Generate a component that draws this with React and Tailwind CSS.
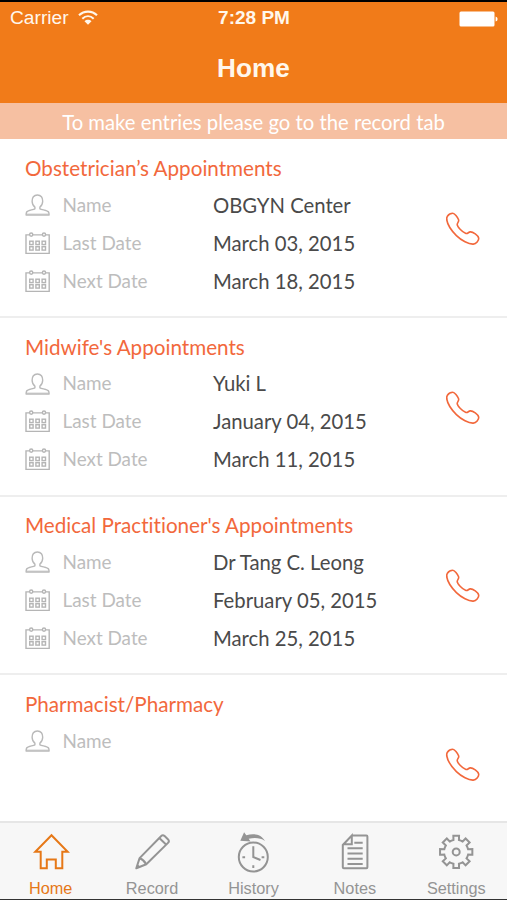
import React from 'react';

const sections = [
  {
    title: 'Obstetrician’s Appointments',
    rows: [
      ['Name', 'OBGYN Center'],
      ['Last Date', 'March 03, 2015'],
      ['Next Date', 'March 18, 2015'],
    ],
  },
  {
    title: "Midwife's Appointments",
    rows: [
      ['Name', 'Yuki L'],
      ['Last Date', 'January 04, 2015'],
      ['Next Date', 'March 11, 2015'],
    ],
  },
  {
    title: "Medical Practitioner's Appointments",
    rows: [
      ['Name', 'Dr Tang C. Leong'],
      ['Last Date', 'February 05, 2015'],
      ['Next Date', 'March 25, 2015'],
    ],
  },
  { title: 'Pharmacist/Pharmacy', rows: [['Name', '']] },
];

function WifiIcon() {
  return (
    <svg width="20" height="16" viewBox="0 0 20 16" fill="none" stroke="#fff7ec" strokeWidth="2.1">
      <path d="M1 5.3C6.1.4 13.9.4 19 5.3" />
      <path d="M4.3 8.7C7.7 5.4 12.3 5.4 15.7 8.7" />
      <path d="M6.5 11.2C8.5 9.3 11.5 9.3 13.5 11.2L10 14.7Z" fill="#fff7ec" stroke="none" />
    </svg>
  );
}

function BatteryIcon() {
  return (
    <svg width="39" height="16" viewBox="0 0 39 16" fill="#fff">
      <rect x="0.5" y="0.5" width="35" height="15" rx="1.5" />
      <path d="M36.6 5.5Q38.6 6 38.6 8Q38.6 10 36.6 10.5Z" />
    </svg>
  );
}

function PersonIcon() {
  return (
    <svg width="26" height="24" viewBox="0 0 26 24" fill="none" stroke="#b9b9b9" strokeWidth="1.4" strokeLinejoin="round">
      <path d="M12.4 2C8.8 2 7 4.7 7.1 8.2C7.2 10.8 8.4 13 9.9 14.1V15.8C8 17 2.6 17.1 1.6 19.1C1.2 20 1.1 21.2 1.1 22.1H24.1C24.1 21.2 24 20 23.6 19.1C22.6 17.1 17.1 17 14.9 15.8V14.1C16.4 13 17.6 10.8 17.7 8.2C17.8 4.7 16 2 12.4 2Z" />
      <path d="M1.5 21.2H23.9" strokeWidth="1" />
    </svg>
  );
}

function CalendarIcon() {
  return (
    <svg width="26" height="24" viewBox="0 0 26 24" fill="none" stroke="#b5b5b5" strokeWidth="1.4">
      <path d="M4.6 3.9H1V22.4H24.2V3.9H20.6M7.9 3.9H17.3" />
      <circle cx="6.2" cy="3.6" r="1.6" />
      <circle cx="19" cy="3.6" r="1.6" />
      {[6.4, 12.6, 18.8].map((x) => (
        <g key={x}>
          <rect x={x - 1.7} y="10.2" width="3.4" height="3.4" />
          <rect x={x - 1.7} y="15.7" width="3.4" height="3.4" />
        </g>
      ))}
    </svg>
  );
}

function PhoneIcon() {
  return (
    <svg width="36" height="36" viewBox="0 0 36 36" fill="none" stroke="#f2683c" strokeWidth="1.6" strokeLinejoin="round">
      <path d="M2.4 5.2C3.5 3.6 5.8 2.3 7.8 2.3C9.6 2.3 12.5 6.1 13.6 8.7C14.4 10.7 12.2 11.5 12.2 13.5C12.2 15.8 17.2 21.1 20.5 22.3C22.7 23.1 23.3 21.2 25.2 20.9C27.7 20.6 33.4 24.6 33.7 27.2C33.9 29.5 31.2 32.9 28.3 33.1C23.8 33.4 16.3 29.4 11.4 24.6C6.5 19.7 2.5 13.3 1.8 9C1.6 7.4 1.7 6.2 2.4 5.2Z" />
    </svg>
  );
}

function HomeIcon() {
  return (
    <svg width="38" height="42" viewBox="0 0 38 42" fill="none" stroke="currentColor" strokeWidth="2">
      <path d="M19.5 4.3L3.3 20.8H8.7V37.3H14.8V28.5H23.8V37.3H30.3V20.8H35.7Z" />
    </svg>
  );
}

function PencilIcon() {
  return (
    <svg width="38" height="42" viewBox="0 0 38 42" fill="none" stroke="currentColor" strokeWidth="2" strokeLinejoin="round">
      <path d="M3.3 37.3L6.6 27.1L28 5.2Q29.8 3.5 31.6 5.1L35.1 8.4Q36.7 10.2 35 11.9L13.3 33.3Z" />
      <path d="M6.7 27.3Q11 28.9 13.2 33.2M26.3 7L33.3 13.7" />
      <path d="M3.1 37.5L4.4 33L7.7 36Z" fill="currentColor" stroke="none" />
    </svg>
  );
}

function HistoryIcon() {
  return (
    <svg width="38" height="42" viewBox="0 0 38 42" fill="none" stroke="currentColor" strokeWidth="2">
      <circle cx="19.3" cy="26" r="14.5" />
      <path d="M19.3 15.3V26L26.5 29" />
      <path d="M6.3 9.7L10.1 1.2L12.3 4.3C19.8 1.8 27.3 3.3 31 9.9C26.5 6.8 20.9 6.4 14.7 7.7L16.5 10.6Z" fill="currentColor" stroke="none" />
      <path d="M8.4 26.3H11.1M27.6 26.3H30.3M19.3 34.2V36.9" />
    </svg>
  );
}

function NotesIcon() {
  return (
    <svg width="38" height="42" viewBox="0 0 38 42" fill="none" stroke="currentColor" strokeWidth="2">
      <path d="M15.8 4.5H30.5Q31.4 4.5 31.4 5.4V36.3Q31.4 37.3 30.5 37.3H7.8Q6.8 37.3 6.8 36.3V14L15.8 4.5V13.2H7.2" />
      <path d="M18.3 11.8H26.7M11.5 17.2H26.7M11.5 22.5H26.7M11.5 27.8H26.7M11.5 33H26.7" />
    </svg>
  );
}

// Eight teeth, each joined to the next by a shallow arc
function gearPath(cx, cy, outer, inner) {
  const at = (r, deg) => {
    const a = (deg * Math.PI) / 180;
    return `${(cx + r * Math.cos(a)).toFixed(2)} ${(cy + r * Math.sin(a)).toFixed(2)}`;
  };
  let d = '';
  for (let i = 0; i < 8; i++) {
    const a = i * 45;
    d += `${i ? `A${inner} ${inner} 0 0 1 ` : 'M'}${at(inner, a - 13)}L${at(outer, a - 10)}L${at(outer, a + 10)}L${at(inner, a + 13)}`;
  }
  return `${d}A${inner} ${inner} 0 0 1 ${at(inner, -13)}Z`;
}

function SettingsIcon() {
  return (
    <svg width="38" height="42" viewBox="0 0 38 42" fill="none" stroke="currentColor" strokeWidth="2">
      <path d={gearPath(19.2, 20.9, 16.4, 12.2)} />
      <circle cx="19.2" cy="20.9" r="3.5" />
    </svg>
  );
}

const tabs = [
  { label: 'Home', Icon: HomeIcon },
  { label: 'Record', Icon: PencilIcon },
  { label: 'History', Icon: HistoryIcon },
  { label: 'Notes', Icon: NotesIcon },
  { label: 'Settings', Icon: SettingsIcon },
];

function Section({ title, rows }) {
  return (
    <section className="h-[178.6px] shrink-0 border-b-2 border-[#eeeeee] pl-[25px] pt-[13.5px] pr-[26px]">
      <h2 className="text-[20.65px] leading-[30px] text-[#f2683c]">{title}</h2>
      <div className="flex">
        <div className="flex-1 pt-[3px]">
          {rows.map(([label, value]) => (
            <div key={label} className="flex h-[37.9px] items-center">
              {label === 'Name' ? <PersonIcon /> : <CalendarIcon />}
              <span className="ml-[11.5px] w-[150.5px] text-[18.9px] text-[#bdbdbd]">{label}</span>
              <span className="whitespace-nowrap text-[20.3px] text-[#4a4a4a]">{value}</span>
            </div>
          ))}
        </div>
        <button className="mt-[28px] h-9 w-9">
          <PhoneIcon />
        </button>
      </div>
    </section>
  );
}

export default function App() {
  return (
    <div className="flex h-[900px] w-[507px] flex-col overflow-hidden border-t-2 border-b border-t-black border-b-[#333] bg-white font-['Lato',sans-serif] [font-variant-ligatures:none]">
      {/* Header */}
      <header className="h-[101px] shrink-0 bg-[#f17b19] font-['Liberation_Sans',sans-serif] text-[#fff7ec]">
        <div className="grid h-[33px] grid-cols-3 items-center pl-[10px] pr-[9px]">
          <div className="flex items-center gap-[9px] text-[19.2px]">
            <span>Carrier</span>
            <WifiIcon />
          </div>
          <div className="text-center text-[19px] font-bold">7:28 PM</div>
          <div className="flex justify-end">
            <BatteryIcon />
          </div>
        </div>
        <h1 className="pt-[15px] text-center text-[26.2px] leading-[36px] font-bold">Home</h1>
      </header>

      {/* Hint */}
      <div className="flex h-9 shrink-0 items-center justify-center bg-[#f6c0a2] pt-[3px] text-[20.3px] text-white">
        To make entries please go to the record tab
      </div>

      {/* Appointments */}
      <main className="flex min-h-0 flex-1 flex-col overflow-hidden pt-[0.5px]">
        {sections.map((s) => (
          <Section key={s.title} title={s.title} rows={s.rows} />
        ))}
      </main>

      {/* Tab bar */}
      <nav className="grid h-[78px] shrink-0 grid-cols-5 border-t-2 border-[#e6e6e6] bg-[#f7f7f7] font-['Liberation_Sans',sans-serif]">
        {tabs.map(({ label, Icon }, i) => (
          <button
            key={label}
            className={`flex flex-col items-center pt-2 text-[16.3px] leading-[20px] ${i === 0 ? 'text-[#e67817]' : 'text-[#949494]'}`}
          >
            <Icon />
            <span className="mt-[5px]">{label}</span>
          </button>
        ))}
      </nav>
    </div>
  );
}
